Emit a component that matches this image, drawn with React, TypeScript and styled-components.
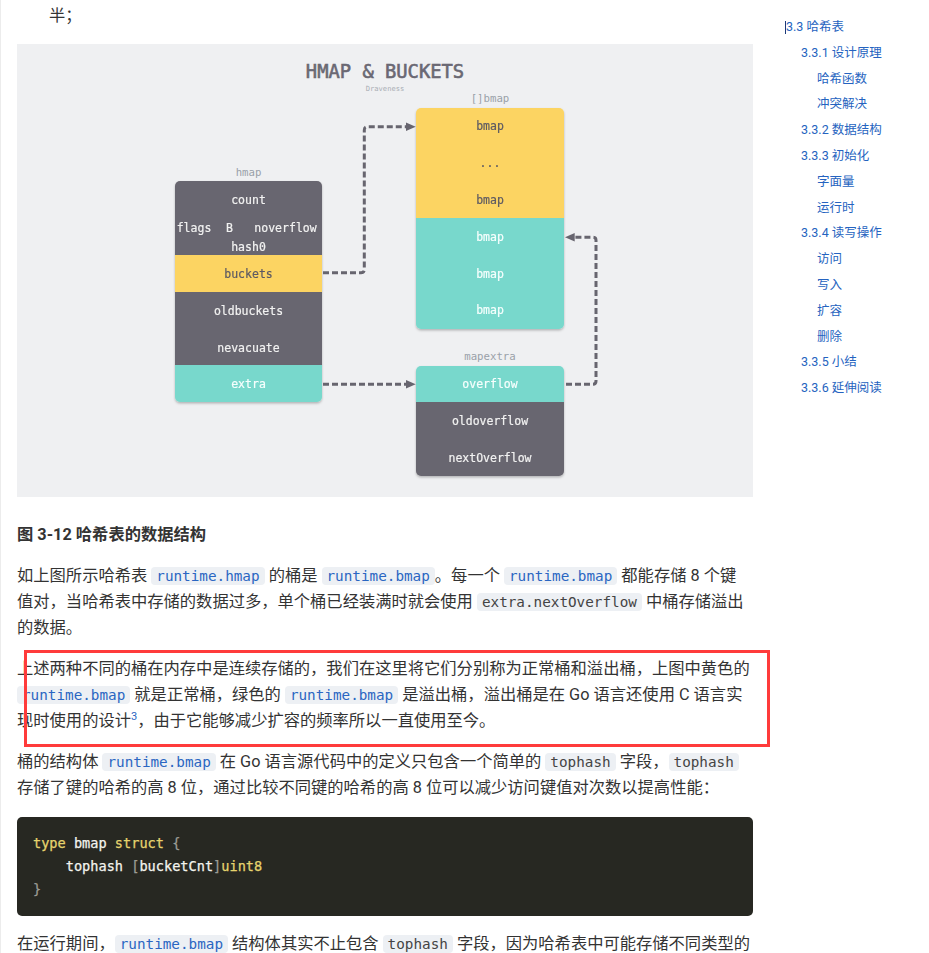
import React from 'react';
import styled, { createGlobalStyle, css } from 'styled-components';

const GlobalStyle = createGlobalStyle`
  html, body { margin: 0; padding: 0; background: #ffffff; overflow: hidden; }
  body {
    font-family: Roboto, "Noto Sans CJK SC", sans-serif;
    color: #333333;
  }
  * { box-sizing: border-box; }
`;

const Page = styled.div`
  position: relative;
  display: flex;
  align-items: flex-start;
  width: 929px;
  height: 953px;
  overflow: hidden;
  border-left: 1px solid #ececec;
`;

const Main = styled.main`
  flex: none;
  width: 736px;
  margin-left: 16px;
  padding-top: 3px;
  font-size: 16.3px;
  line-height: 26px;
`;

const ListLine = styled.p`
  margin: 0;
  padding-left: 32px;
`;

const Para = styled.p`
  margin: 15.3px 0 0;
  white-space: nowrap;
`;

const Caption = styled.p`
  margin: 24.5px 0 0;
  font-weight: 700;
`;

const Figure = styled.figure`
  margin: 15px 0 0;
  height: 453px;
  background: #eff0f2;
  svg { display: block; }
`;

const Code = styled.code<{ $link?: boolean }>`
  font-family: "DejaVu Sans Mono", monospace;
  font-size: 14.3px;
  padding: 1px 5px;
  border-radius: 4px;
  background: #edf0f4;
  color: ${(p) => (p.$link ? '#2a66c2' : '#444444')};
`;

const Sup = styled.sup`
  font-size: 11px;
  line-height: 0;
  color: #2a66c2;
`;

const CodeBlock = styled.pre`
  margin: 15.5px 0 0;
  padding: 15px 16px;
  border-radius: 5px;
  background: #272822;
  color: #f4f4ee;
  font-family: "DejaVu Sans Mono", monospace;
  font-size: 13.6px;
  line-height: 23px;
  -webkit-text-stroke: 0.25px currentColor;
`;

const Tok = styled.span<{ $kind: 'kw' | 'punc' }>`
  color: ${(p) => (p.$kind === 'kw' ? '#e6d46e' : '#9c9c96')};
`;

const Toc = styled.nav`
  flex: none;
  margin-left: 32px;
  padding-top: 14px;
  font-size: 12.5px;
  line-height: 25.8px;
`;

const TocItem = styled.a<{ $level: 1 | 2 | 3; $active?: boolean }>`
  display: block;
  white-space: nowrap;
  color: #2563c0;
  text-decoration: none;
  padding-left: ${(p) => (p.$level === 1 ? 1 : p.$level === 2 ? 16 : 32)}px;
  position: relative;
  ${(p) =>
    p.$active &&
    css`
      &::before {
        content: '';
        position: absolute;
        left: 0;
        top: 7px;
        width: 1px;
        height: 13px;
        background: #1b3a7a;
      }
    `}
`;

const Highlight = styled.div`
  position: absolute;
  left: 23px;
  top: 650px;
  width: 746px;
  height: 97px;
  border: 3px solid #ff3b3b;
  pointer-events: none;
`;

const DARK = '#68666f';
const YELLOW = '#fcd462';
const TEAL = '#78d8cc';
const MONO = '"DejaVu Sans Mono", monospace';

type Row = { h: number; fill: string; ink: string; labels: { text: string; y: number; x?: number }[] };

function Stack({ id, x, y, w, rows }: { id: string; x: number; y: number; w: number; rows: Row[] }) {
  const total = rows.reduce((s, r) => s + r.h, 0);
  let cy = y;
  return (
    <g filter="url(#shadow)">
      <clipPath id={id}>
        <rect x={x} y={y} width={w} height={total} rx={5} />
      </clipPath>
      <g clipPath={`url(#${id})`}>
        {rows.map((r, i) => {
          const top = cy;
          cy += r.h;
          return <rect key={i} x={x} y={top} width={w} height={r.h} fill={r.fill} />;
        })}
      </g>
      {rows.map((r) =>
        r.labels.map((l) => (
          <text
            key={l.text + l.y}
            x={l.x ?? x + w / 2}
            y={l.y}
            fill={r.ink}
            fontFamily={MONO}
            fontSize={11.5}
            textAnchor="middle"
            dominantBaseline="central"
            stroke={r.ink}
            strokeWidth={0.2}
          >
            {l.text}
          </text>
        ))
      )}
    </g>
  );
}

function Diagram() {
  const dash = { stroke: '#67656f', strokeWidth: 3, strokeDasharray: '6 3', fill: 'none' };
  return (
    <svg width={736} height={453} viewBox="0 0 736 453">
      <defs>
        <filter id="shadow" x="-10%" y="-10%" width="120%" height="120%">
          <feDropShadow dx="0" dy="1.5" stdDeviation="1.2" floodColor="#000" floodOpacity="0.25" />
        </filter>
      </defs>
      <text
        x={368}
        y={34.3}
        textAnchor="middle"
        fontFamily={MONO}
        fontSize={18.8}
        fill="#6a6873"
        stroke="#6a6873"
        strokeWidth={0.6}
      >
        HMAP &amp; BUCKETS
      </text>
      <text x={368} y={44} textAnchor="middle" dominantBaseline="central" fontFamily={MONO} fontSize={7.1} fill="#a9aeb5">
        Draveness
      </text>
      <text x={473} y={54.3} textAnchor="middle" dominantBaseline="central" fontFamily={MONO} fontSize={10.7} fill="#9aa1a9">
        []bmap
      </text>
      <text x={231.5} y={128.3} textAnchor="middle" dominantBaseline="central" fontFamily={MONO} fontSize={10.7} fill="#9aa1a9">
        hmap
      </text>
      <text x={473} y={312} textAnchor="middle" dominantBaseline="central" fontFamily={MONO} fontSize={10.7} fill="#9aa1a9">
        mapextra
      </text>

      <Stack
        id="hmapClip"
        x={158}
        y={137}
        w={147}
        rows={[
          {
            h: 74,
            fill: DARK,
            ink: '#f2f2f2',
            labels: [
              { text: 'count', y: 156.3 },
              { text: 'flags', y: 183.7, x: 177 },
              { text: 'B', y: 183.7, x: 212.5 },
              { text: 'noverflow', y: 183.7, x: 268.5 },
              { text: 'hash0', y: 202.7 },
            ],
          },
          { h: 37, fill: YELLOW, ink: '#5d5a63', labels: [{ text: 'buckets', y: 230 }] },
          {
            h: 73,
            fill: DARK,
            ink: '#f2f2f2',
            labels: [
              { text: 'oldbuckets', y: 267 },
              { text: 'nevacuate', y: 303.7 },
            ],
          },
          { h: 37, fill: TEAL, ink: '#f6fffd', labels: [{ text: 'extra', y: 340 }] },
        ]}
      />

      <Stack
        id="bmapClip"
        x={399}
        y={64}
        w={148}
        rows={[
          {
            h: 110,
            fill: YELLOW,
            ink: '#5d5a63',
            labels: [
              { text: 'bmap', y: 82.4 },
              { text: '...', y: 119.2 },
              { text: 'bmap', y: 156 },
            ],
          },
          {
            h: 111,
            fill: TEAL,
            ink: '#f6fffd',
            labels: [
              { text: 'bmap', y: 192.8 },
              { text: 'bmap', y: 229.6 },
              { text: 'bmap', y: 266.4 },
            ],
          },
        ]}
      />

      <Stack
        id="extraClip"
        x={399}
        y={322}
        w={148}
        rows={[
          { h: 36, fill: TEAL, ink: '#f6fffd', labels: [{ text: 'overflow', y: 340.3 }] },
          {
            h: 74,
            fill: DARK,
            ink: '#f2f2f2',
            labels: [
              { text: 'oldoverflow', y: 377 },
              { text: 'nextOverflow', y: 414.3 },
            ],
          },
        ]}
      />

      <path d="M306 228.7 H344 Q347.3 228.7 347.3 225.4 V86 Q347.3 82.7 350.6 82.7 H390" {...dash} />
      <polygon points="398.7,82.7 389,78.5 389,86.9" fill="#67656f" />

      <path d="M306 340.3 H390" {...dash} />
      <polygon points="398.7,340.3 389,336.1 389,344.5" fill="#67656f" />

      <path d="M549 340.3 H576 Q579 340.3 579 337 V196.3 Q579 193.3 576 193.3 H558" {...dash} />
      <polygon points="548,193.3 557.7,189.1 557.7,197.5" fill="#67656f" />
    </svg>
  );
}

const tocItems: { level: 1 | 2 | 3; text: string; active?: boolean }[] = [
  { level: 1, text: '3.3 哈希表', active: true },
  { level: 2, text: '3.3.1 设计原理' },
  { level: 3, text: '哈希函数' },
  { level: 3, text: '冲突解决' },
  { level: 2, text: '3.3.2 数据结构' },
  { level: 2, text: '3.3.3 初始化' },
  { level: 3, text: '字面量' },
  { level: 3, text: '运行时' },
  { level: 2, text: '3.3.4 读写操作' },
  { level: 3, text: '访问' },
  { level: 3, text: '写入' },
  { level: 3, text: '扩容' },
  { level: 3, text: '删除' },
  { level: 2, text: '3.3.5 小结' },
  { level: 2, text: '3.3.6 延伸阅读' },
];

export default function App() {
  return (
    <>
      <GlobalStyle />
      <Page>
        <Main>
          <ListLine>半；</ListLine>
          <Figure>
            <Diagram />
          </Figure>
          <Caption>图 3-12 哈希表的数据结构</Caption>
          <Para>
            如上图所示哈希表 <Code $link>runtime.hmap</Code> 的桶是 <Code $link>runtime.bmap</Code>。每一个{' '}
            <Code $link>runtime.bmap</Code> 都能存储 8 个键
            <br />
            值对，当哈希表中存储的数据过多，单个桶已经装满时就会使用 <Code>extra.nextOverflow</Code> 中桶存储溢出
            <br />
            的数据。
          </Para>
          <Para>
            上述两种不同的桶在内存中是连续存储的，我们在这里将它们分别称为正常桶和溢出桶，上图中黄色的
            <br />
            <Code $link>runtime.bmap</Code> 就是正常桶，绿色的 <Code $link>runtime.bmap</Code> 是溢出桶，溢出桶是在 Go
            语言还使用 C 语言实
            <br />
            现时使用的设计<Sup>3</Sup>，由于它能够减少扩容的频率所以一直使用至今。
          </Para>
          <Para>
            桶的结构体 <Code $link>runtime.bmap</Code> 在 Go 语言源代码中的定义只包含一个简单的 <Code>tophash</Code>{' '}
            字段，<Code>tophash</Code>
            <br />
            存储了键的哈希的高 8 位，通过比较不同键的哈希的高 8 位可以减少访问键值对次数以提高性能：
          </Para>
          <CodeBlock>
            <Tok $kind="kw">type</Tok> bmap <Tok $kind="kw">struct</Tok> <Tok $kind="punc">{'{'}</Tok>
            {'\n    '}tophash <Tok $kind="punc">[</Tok>bucketCnt<Tok $kind="punc">]</Tok>
            <Tok $kind="kw">uint8</Tok>
            {'\n'}
            <Tok $kind="punc">{'}'}</Tok>
          </CodeBlock>
          <Para>
            在运行期间，<Code $link>runtime.bmap</Code> 结构体其实不止包含 <Code>tophash</Code>{' '}
            字段，因为哈希表中可能存储不同类型的
          </Para>
        </Main>
        <Toc>
          {tocItems.map((t) => (
            <TocItem key={t.text} $level={t.level} $active={t.active} href="#">
              {t.text}
            </TocItem>
          ))}
        </Toc>
        <Highlight />
      </Page>
    </>
  );
}
